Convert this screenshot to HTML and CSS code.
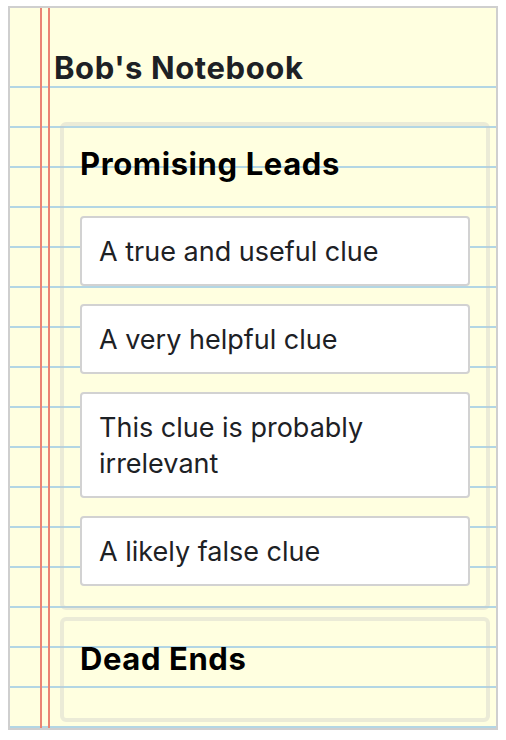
FILE: index.html
```html
<!DOCTYPE html>
<html lang="en">
<head>
<meta charset="utf-8">
<title>Bob's Notebook</title>
<link rel="stylesheet" href="styles.css">
</head>
<body>
<main class="notebook">
  <h1 class="notebook-title">Bob's Notebook</h1>
  <div class="columns">
    <section class="column">
      <h2 class="column-title">Promising Leads</h2>
      <ul class="card-list">
        <li class="card">A true and useful clue</li>
        <li class="card">A very helpful clue</li>
        <li class="card">This clue is probably irrelevant</li>
        <li class="card">A likely false clue</li>
      </ul>
    </section>
    <section class="column">
      <h2 class="column-title">Dead Ends</h2>
      <ul class="card-list"></ul>
    </section>
  </div>
</main>
</body>
</html>
```
FILE: styles.css
```css
* { box-sizing: border-box; }

html, body { background: #fff; }

body {
  margin: 6px 8px 0;
  font-family: Inter, "Noto Sans", sans-serif;
}

.notebook {
  height: 724px;
  border: 2px solid #cfcfcf;
  padding: 42px 6px 0 44px;
  background:
    linear-gradient(to right,
      transparent 30px, #ea8474 30px, #ea8474 32px, transparent 32px,
      transparent 38px, #ea8474 38px, #ea8474 40px, transparent 40px),
    linear-gradient(#ffffe0, #ffffe0) 0 0 / 100% 40px no-repeat,
    repeating-linear-gradient(to bottom,
      #ffffe0 0, #ffffe0 38px, #b3d6e4 38px, #b3d6e4 40px);
}

.notebook-title {
  margin: 0;
  font-size: 31px;
  letter-spacing: 0.6px;
  line-height: 36px;
  font-weight: 700;
  color: #1d2125;
}

.columns {
  margin: 36px 0 0 6px;
  display: flex;
  flex-direction: column;
  gap: 7px;
}

.column {
  border: 4px solid rgba(200, 200, 200, 0.36);
  border-radius: 6px;
  padding: 20px 16px 20px;
}

.column-title {
  margin: 0 0 34px;
  font-size: 31px;
  letter-spacing: 0.6px;
  line-height: 36px;
  font-weight: 700;
  color: #000;
}

.card-list {
  list-style: none;
  margin: 0;
  padding: 0;
  display: flex;
  flex-direction: column;
  gap: 18px;
}

.card-list:empty { display: none; }

.column-title:has(+ .card-list:empty) { margin-bottom: 21px; }

.card {
  background: #fff;
  border: 2px solid #d2d2d2;
  border-radius: 4px;
  padding: 16px 17px 14px;
  font-size: 27px;
  line-height: 36px;
  color: #1d2125;
}
```
